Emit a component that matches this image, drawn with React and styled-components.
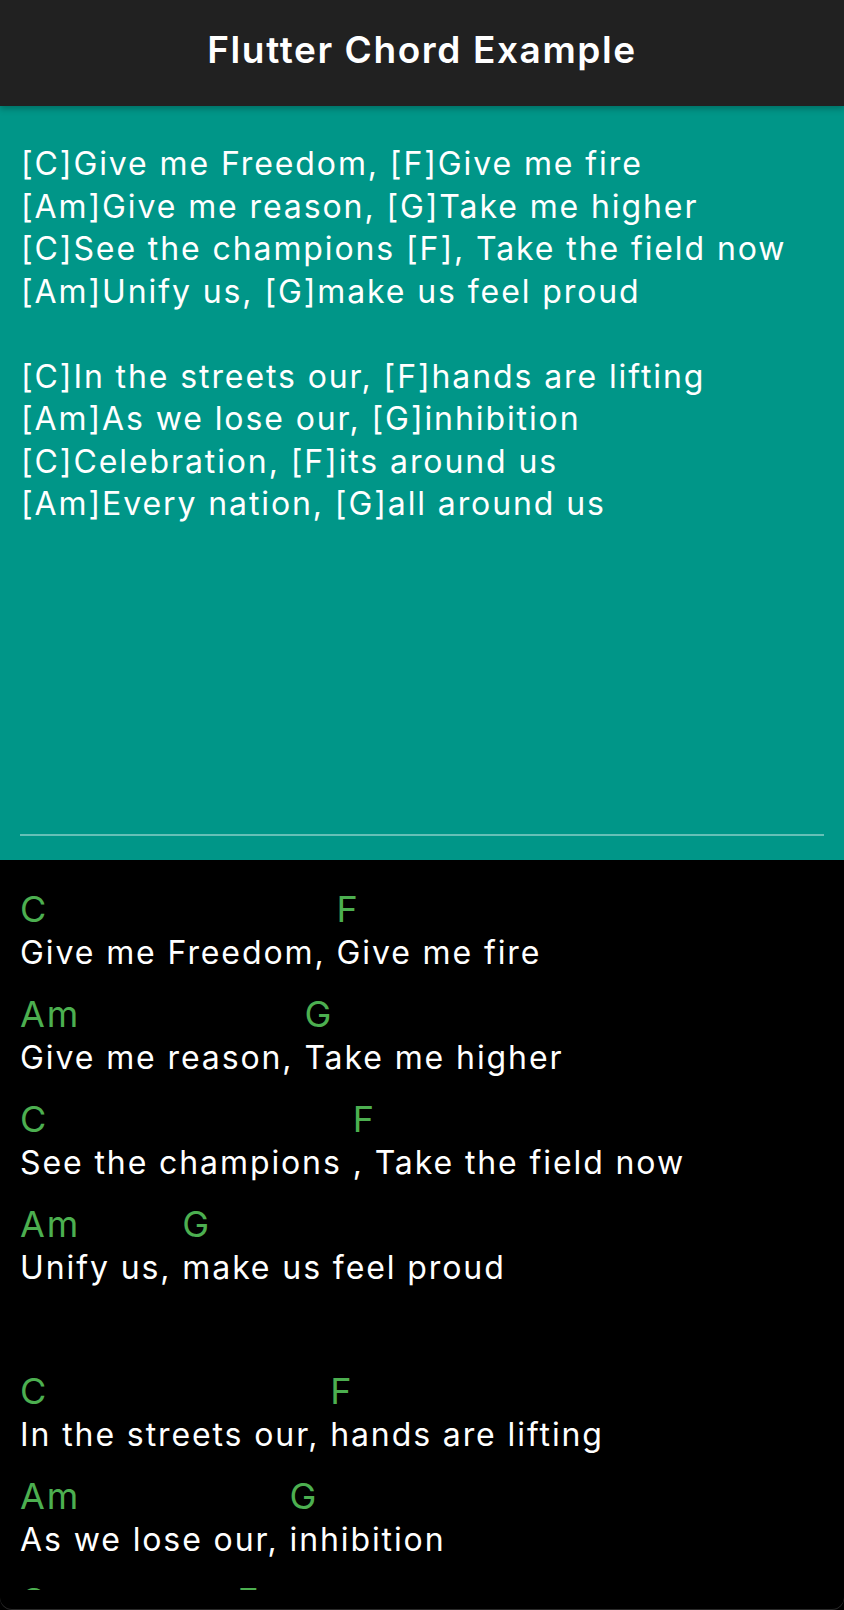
import styled, { createGlobalStyle } from 'styled-components'

const song = `[C]Give me Freedom, [F]Give me fire
[Am]Give me reason, [G]Take me higher
[C]See the champions [F], Take the field now
[Am]Unify us, [G]make us feel proud

[C]In the streets our, [F]hands are lifting
[Am]As we lose our, [G]inhibition
[C]Celebration, [F]its around us
[Am]Every nation, [G]all around us`

const parseLine = (line) => {
    const parts = line.split(/\[([^\]]+)\]/)
    const segments = []
    if (parts[0]) segments.push({ chord: '', text: parts[0] })
    for (let i = 1; i < parts.length; i += 2) {
        segments.push({ chord: parts[i], text: parts[i + 1] || '' })
    }
    return segments
}

const GlobalStyle = createGlobalStyle`
    html, body {
        margin: 0;
        padding: 0;
        background: #000;
    }
    body {
        font-family: Inter, "Noto Sans", "Liberation Sans", sans-serif;
        -webkit-font-smoothing: antialiased;
    }
`

const Frame = styled.div`
    height: 1610px;
    display: flex;
    flex-direction: column;
    overflow: hidden;
    background: #000;
    border-radius: 0 0 12px 12px;
    box-shadow: inset 0 -1px 0 #2a2a2a;
`

const AppBar = styled.header`
    height: 106px;
    flex-shrink: 0;
    box-sizing: border-box;
    padding-bottom: 7px;
    display: flex;
    align-items: center;
    justify-content: center;
    background: #212121;
    box-shadow: 0 3px 6px rgba(0, 0, 0, 0.25);
    position: relative;
    z-index: 1;
`

const Title = styled.h1`
    margin: 0;
    font-size: 37px;
    font-weight: 600;
    color: #fff;
    letter-spacing: 1.6px;
`

const Editor = styled.section`
    height: 754px;
    flex-shrink: 0;
    box-sizing: border-box;
    padding: 37px 20px 24px;
    background: #009688;
    display: flex;
    flex-direction: column;
`

const Source = styled.div`
    flex: 1;
    padding: 0 1px;
    white-space: pre;
    color: #fff;
    font-size: 32px;
    letter-spacing: 1.9px;
    line-height: 42.5px;
    border-bottom: 2px solid rgba(255, 255, 255, 0.4);
`

const Sheet = styled.section`
    height: 730px;
    flex-shrink: 0;
    box-sizing: border-box;
    padding: 27px 20px 0;
    overflow: hidden;
    background: #000;
`

const Row = styled.div`
    display: flex;
    flex-wrap: wrap;
    margin-bottom: 17px;
    min-height: ${props => props.$empty ? '45px' : 'auto'};
`

const Segment = styled.div`
    display: flex;
    flex-direction: column;
    white-space: pre;
`

const Chord = styled.span`
    font-size: 36px;
    letter-spacing: 2px;
    line-height: 44px;
    height: 44px;
    color: #4caf50;
`

const Lyric = styled.span`
    font-size: 32px;
    letter-spacing: 1.9px;
    line-height: 44px;
    color: #fff;
`

const App = () => {
    const lines = song.split('\n')

    return (
        <>
            <GlobalStyle />
            <Frame>
                <AppBar>
                    <Title>Flutter Chord Example</Title>
                </AppBar>

                <Editor>
                    <Source>{song}</Source>
                </Editor>

                <Sheet>
                    {lines.map((line, i) => {
                        const segments = parseLine(line)
                        return (
                            <Row key={i} $empty={segments.length === 0}>
                                {segments.map((seg, j) => (
                                    <Segment key={j}>
                                        <Chord>{seg.chord}</Chord>
                                        <Lyric>{seg.text}</Lyric>
                                    </Segment>
                                ))}
                            </Row>
                        )
                    })}
                </Sheet>
            </Frame>
        </>
    )
}

export default App
